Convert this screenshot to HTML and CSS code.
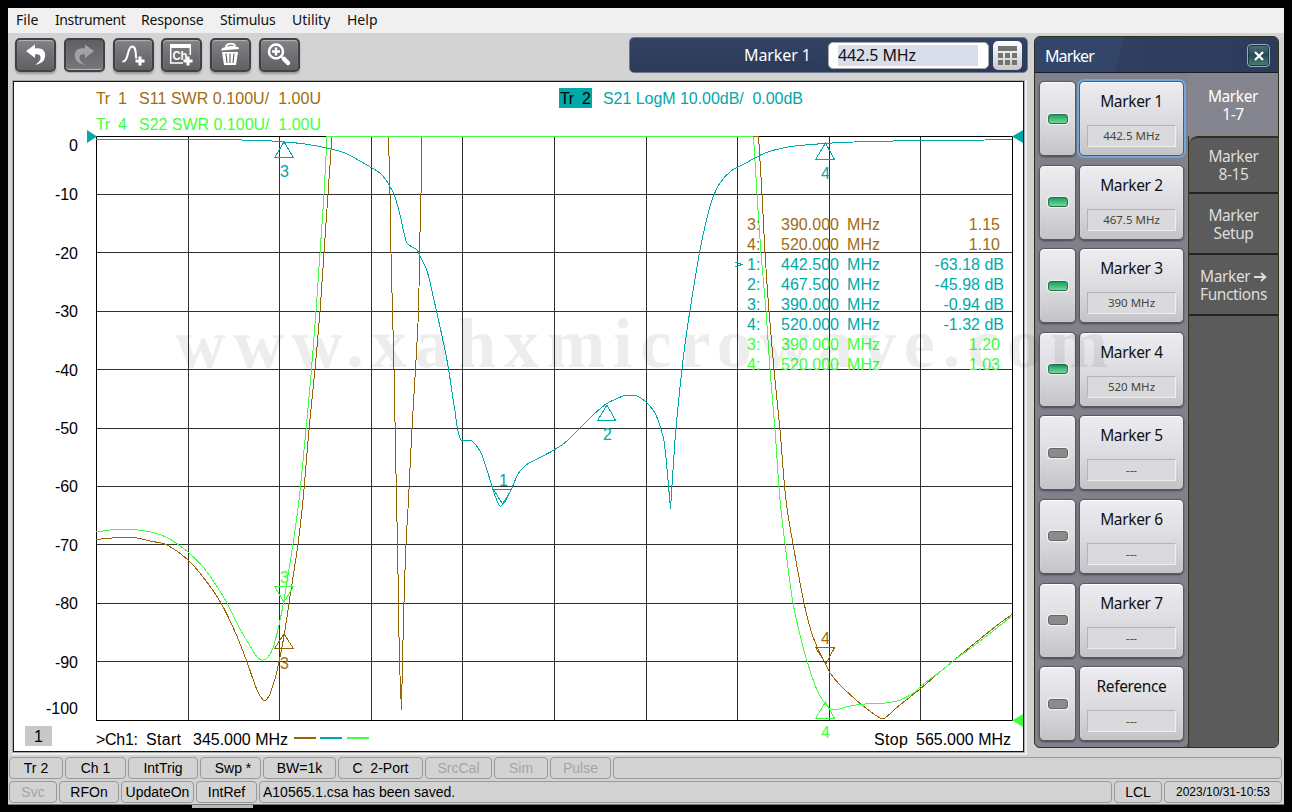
FILE: index.html
```html
<!DOCTYPE html>
<html lang="en">
  <head>
    <meta charset="UTF-8" />
    <title>Network Analyzer</title>
    <link rel="stylesheet" href="styles.css">
  </head>
  <body>
    <div class="window">
      <nav class="menu">
        <span class="m-file">File</span>
        <span class="m-inst">Instrument</span>
        <span class="m-resp">Response</span>
        <span class="m-stim">Stimulus</span>
        <span class="m-util">Utility</span>
        <span class="m-help">Help</span>
      </nav>

      <div class="main">
        <div class="left">
          <div class="toolbar">
            <div class="tools">
              <button class="tool">
                <svg viewBox="0 0 41 34"><path d="M11 13 L20 6.500 V10.500 C28 9 31 14 30 19 C29 24 25 26 20 27 C24 24 26 22 25.500 19 C25 16.500 23 16 20 16.500 V20 Z" fill="#fff" /></svg>
              </button>
              <button class="tool disabled">
                <svg viewBox="0 0 41 34"><path d="M30 13 L21 6.500 V10.500 C13 9 10 14 11 19 C12 24 16 26 21 27 C17 24 15 22 15.500 19 C16 16.500 18 16 21 16.500 V20 Z" fill="#a3a3a7" /></svg>
              </button>
              <button class="tool">
                <svg viewBox="0 0 41 34"><path d="M9.500 23.500 C16 24 14 8.500 19 8.500 C24 8.500 22 17 23.500 20.500" fill="none" stroke="#fff" stroke-width="2" /><path d="M27 18.500 V27.500 M22.500 23 H31.500" stroke="#fff" stroke-width="3" /></svg>
              </button>
              <button class="tool">
                <svg viewBox="0 0 41 34"><path d="M29.300 7 V17 M22 25 H9.700 V7" fill="none" stroke="#fff" stroke-width="1.500" /><path d="M9 6 H30 V10 H9 Z" fill="#fff" /><text x="11.500" y="21.500" textLength="15" lengthAdjust="spacingAndGlyphs" class="ch">Ch</text><path d="M27 18.500 V27.500 M22.500 23 H31.500" stroke="#fff" stroke-width="3" /></svg>
              </button>
              <button class="tool">
                <svg viewBox="0 0 41 34"><path d="M16 9 C16 5 24 5 25 8" fill="none" stroke="#fff" stroke-width="2" /><path d="M11 12.500 C11 8 29 6 29 11 Z M12 14 H28 L26 27 H14 Z" fill="#fff" /><path d="M16 15.500 L17 25 M20 15.500 V25 M24 15.500 L23 25" stroke="#666669" stroke-width="1.200" /></svg>
              </button>
              <button class="tool">
                <svg viewBox="0 0 41 34"><circle cx="17" cy="13.500" r="7" fill="none" stroke="#fff" stroke-width="2.500" /><path d="M17 9.500 V17.500 M13 13.500 H21" stroke="#fff" stroke-width="2.500" /><path d="M22 18.500 L24.500 20.500" stroke="#fff" stroke-width="2" /><path d="M25 21 L29 25" stroke="#fff" stroke-width="4.500" stroke-linecap="round" /></svg>
              </button>
            </div>
            <div class="entry">
              <label>Marker 1</label>
              <div class="field"><span>442.5 MHz</span></div>
              <button class="keypad">
                <svg viewBox="0 0 29 29"><path d="M5 5 H24 V10 H5 Z M5 12 h5 v5 h-5 Z M12 12 h5 v5 h-5 Z M19 12 h5 v5 h-5 Z M5 19 h5 v5 h-5 Z M12 19 h5 v5 h-5 Z M19 19 h5 v5 h-5 Z" fill="#737373" /></svg>
              </button>
            </div>
          </div>

          <div class="screen">
            <svg class="chart" viewBox="14 82 1009 669">
              <rect x="559" y="88" width="33" height="20" fill="#00a8a8" />
              <g class="brown">
                <text x="96" y="104" textLength="31">Tr&#160; 1</text>
                <text x="139" y="104" textLength="182">S11 SWR 0.100U/&#160; 1.00U</text>
              </g>
              <g class="green">
                <text x="96" y="130" textLength="31">Tr&#160; 4</text>
                <text x="139" y="130" textLength="182">S22 SWR 0.100U/&#160; 1.00U</text>
              </g>
              <text x="560" y="104" textLength="31">Tr&#160; 2</text>
              <text class="cyan" x="603" y="104" textLength="200">S21 LogM 10.00dB/&#160; 0.00dB</text>

              <g class="scale">
                <text x="78" y="151">0</text>
                <text x="78" y="200">-10</text>
                <text x="78" y="259">-20</text>
                <text x="78" y="317">-30</text>
                <text x="78" y="376">-40</text>
                <text x="78" y="434">-50</text>
                <text x="78" y="492">-60</text>
                <text x="78" y="551">-70</text>
                <text x="78" y="609">-80</text>
                <text x="78" y="668">-90</text>
                <text x="78" y="714">-100</text>
              </g>

              <path class="grid" d="M188.500 136V720M279.500 136V720M371.500 136V720M462.500 136V720M554.500 136V720M646.500 136V720M737.500 136V720M829.500 136V720M920.500 136V720M96 194.500H1012M96 252.500H1012M96 311.500H1012M96 369.500H1012M96 428.500H1012M96 486.500H1012M96 544.500H1012M96 603.500H1012M96 661.500H1012" />
              <path class="frame" d="M96.500 136.500H1012.500V720.500H96.500Z" />

              <g class="curves"></g>
              <path class="trace t1" d="M753 136.500H759" />
              <path class="trace t4" d="M327 136.500H753" />

              <g class="trace t2">
                <path d="M284 142L293.500 157.500H274.500Z" />
                <path d="M825.500 143L834.500 159.500H815.500Z" />
                <path d="M607 405L615.500 420.500H597.500Z" />
                <path d="M502.500 504L511.500 489.500H493.500Z" />
              </g>
              <g class="trace t4">
                <path d="M284 602L293.500 586.500H274.500Z" />
                <path d="M825.500 702L834.500 718.500H815.500Z" />
              </g>
              <g class="trace t1">
                <path d="M284 634L293.500 648.500H274.500Z" />
                <path d="M826 664L834.500 647.500H815.500Z" />
              </g>
              <g class="cyan">
                <text x="280" y="177">3</text>
                <text x="821" y="179">4</text>
                <text x="603" y="440">2</text>
                <text x="499" y="486">1</text>
              </g>
              <g class="green">
                <text x="280" y="583">3</text>
                <text x="821" y="738">4</text>
              </g>
              <g class="brown">
                <text x="280" y="669">3</text>
                <text x="821" y="644">4</text>
              </g>
              <path d="M87 130L97 136.500L87 143ZM1023 130L1012 136.500L1023 143Z" fill="#00a8a8" />
              <path d="M1023 714L1012 720.500L1023 727Z" fill="#40ff40" />

              <g class="readout"></g>

              <rect x="25" y="726" width="27" height="20" fill="#c8c8c8" />
              <text x="34" y="742">1</text>
              <text x="96" y="745" textLength="42">&gt;Ch1:</text>
              <text x="146" y="745" textLength="35">Start</text>
              <text x="193" y="745" textLength="95">345.000 MHz</text>
              <path class="trace t1 key" d="M294 738H316" />
              <path class="trace t2 key" d="M320 738H342" />
              <path class="trace t4 key" d="M347 738H369" />
              <text x="874" y="745" textLength="34">Stop</text>
              <text x="916" y="745" textLength="95">565.000 MHz</text>
            </svg>
          </div>
        </div>

        <aside class="panel">
          <header>Marker
            <button class="close"><svg viewBox="0 0 10 10"><path d="M1 1L9 9M9 1L1 9" /></svg></button>
          </header>
          <div class="panel-body">
            <div class="keys"></div>
            <div class="tabs">
              <div class="tab active">Marker<br />1-7</div>
              <div class="tab first">Marker<br />8-15</div>
              <div class="tab">Marker<br />Setup</div>
              <div class="tab"><span class="fn">Marker <svg viewBox="0 0 13 10"><path d="M0 5H11M7 1L11.500 5L7 9" /></svg></span>Functions</div>
            </div>
          </div>
        </aside>
      </div>

      <div class="status row1">
        <span>Tr 2</span><span>Ch 1</span><span>IntTrig</span><span class="swp">Swp *</span><span>BW=1k</span><span>C&#160; 2-Port</span><span class="off">SrcCal</span><span class="off">Sim</span><span class="off">Pulse</span><span></span>
      </div>
      <div class="status row2">
        <span class="off">Svc</span><span>RFOn</span><span>UpdateOn</span><span>IntRef</span><span class="message">A10565.1.csa has been saved.</span><span>LCL</span><span class="clock">2023/10/31-10:53</span>
      </div>

      <svg class="watermark" viewBox="0 0 950 90"><text x="4" y="64" textLength="933">www.xahxmicrowave.com</text></svg>
    </div>
    <div class="handle"></div>

    <script src="script.js"></script>
  </body>
</html>
```

FILE: script.js
```js
const traces = [
  ["t1", "96,539.5 112,538 137,538 150,541 167,545 188,560 203,577 221,603 236,634 247,662 257,690 263,700 266,700 270,694 276,675 281,652 285,630 289,603 298,544 303,500 309,430 315,369 320,311 324,253 328,194 332,136"],
  ["t1", "388.5,136 390,194 391,253 392.5,311 394,369 396.5,500 397.5,544 398.5,603 399.5,661 401.5,710"],
  ["t1", "401.5,710 402.5,661 404,603 406,544 408.5,500 412,428 415.5,369 418.5,311 419.5,253 421,194 422,136"],
  ["t1", "758.5,136 762,194 765,253 769,311 774,369 780,430 786,500 793,544 804,603 811,631 818,649 826,665 830,673 840,685 855,699 862,705 880,718 885,718 895,709 920,689 941,671 953,661 975,643 1000,623 1012,614.5"],
  ["t4", "96,532 110,530 125,529 138,530 155,533 170,539 180,546 188,552 203,567 214,582 227,603 240,629 252,649 258,658 263,660 268,657 273,648 279,625 284,600 288,575 293,544 299,500 305,440 311,375 316,311 320,253 324,194 327,136"],
  ["t4", "753.5,136 757,194 761,253 766,311 770,369 775,430 780,500 785,544 793,603 800,635 807,661 817,690 826,705 831,709 839,709 850,706 865,704 885,703 900,700 915,692 921,686 941,671 953,661 975,645 1012,616"],
  ["t2", "96,139.5 207,139.5 262,140.5 285,142 305,144 327,148 345,153 360,161 372,168 380,173 386,180 390,187 394,194 400,215 406,241 409,245 417,250 420,256 427,271 434,300 440,327 445,350 449,372 455,411 461,440 471,440.5 480,451 486,467 491,483 494,493 499,505 501,506 506,500 512,488 518,474 526,465 535,460 554,450 567,441 580,428 592,416 606,404 616,399 625,395.5 635,395.5 641,398 648,404 655,413 660,426 664,441 668,480 670.5,509"],
  ["t2", "670.5,509 673,470 676,428 681,378 684,352 688,323 694,285 700,250 706,222 712,200 720,183 731,171 746,163 755,158 765,153 785,147.5 805,145 825,143.5 840,142.5 872,141.5 920,140.5 985,140 1012,139.5"],
];

// smooth path through the points, tangent of each point taken from its neighbours
function smooth(str) {
  const p = str.split(" ").map((s) => s.split(",").map(Number));
  const tangent = (i) => {
    const a = p[Math.max(i - 1, 0)];
    const b = p[Math.min(i + 1, p.length - 1)];
    const len = Math.hypot(b[0] - a[0], b[1] - a[1]);
    return [(b[0] - a[0]) / len, (b[1] - a[1]) / len];
  };
  let d = `M${p[0]}`;
  for (let i = 1; i < p.length; i++) {
    const [a, b] = [p[i - 1], p[i]];
    const [ta, tb] = [tangent(i - 1), tangent(i)];
    const k = Math.hypot(b[0] - a[0], b[1] - a[1]) / 3;
    d += `C${a[0] + ta[0] * k} ${a[1] + ta[1] * k} ${b[0] - tb[0] * k} ${b[1] - tb[1] * k} ${b}`;
  }
  return d;
}

document.querySelector(".curves").innerHTML = traces
  .map(([name, points]) => `<path class="trace ${name}" d="${smooth(points)}" />`)
  .join("");

const rows = [
  ["brown", "3:", "390.000", "1.15"],
  ["brown", "4:", "520.000", "1.10"],
  ["cyan", "1:", "442.500", "-63.18 dB"],
  ["cyan", "2:", "467.500", "-45.98 dB"],
  ["cyan", "3:", "390.000", "-0.94 dB"],
  ["cyan", "4:", "520.000", "-1.32 dB"],
  ["green", "3:", "390.000", "1.20"],
  ["green", "4:", "520.000", "1.03"],
];

let readout = "";
rows.forEach(([color, n, freq, value], i) => {
  const y = 230 + i * 20;
  const right = value.includes("dB") ? 1004 : 1000;
  readout += `<g class="${color}">
    <text x="747" y="${y}">${n}</text>
    <text x="781" y="${y}" textLength="58">${freq}</text>
    <text x="847" y="${y}" textLength="33">MHz</text>
    <text x="${right}" y="${y}" text-anchor="end">${value}</text>
  </g>`;
});
readout += `<path class="trace t2" d="M735 262L742 264.5L735 267" />`;
document.querySelector(".readout").innerHTML = readout;

const markers = [
  ["Marker 1", "442.5 MHz"],
  ["Marker 2", "467.5 MHz"],
  ["Marker 3", "390 MHz"],
  ["Marker 4", "520 MHz"],
  ["Marker 5", "---"],
  ["Marker 6", "---"],
  ["Marker 7", "---"],
  ["Reference", "---"],
];

document.querySelector(".keys").innerHTML = markers
  .map(
    ([name, value], i) => `<div class="key-row">
      <button class="led-key"><i class="led ${i < 4 ? "on" : ""}"></i></button>
      <button class="marker-key ${i === 0 ? "selected" : ""}">
        <b>${name}</b>
        <span>${value}</span>
      </button>
    </div>`
  )
  .join("");
```

FILE: styles.css
```css
* {
  margin: 0;
  padding: 0;
  box-sizing: border-box;
}

body {
  background: #000;
  padding: 8px;
  height: 812px;
  overflow: hidden;
  font-family: "Noto Sans", sans-serif;
}

button {
  border: none;
  font-family: inherit;
}

.window {
  position: relative;
  width: 1276px;
  height: 797px;
  background: #d3d3d3;
  border-bottom: 1px solid #777;
}

.menu {
  display: flex;
  height: 25px;
  padding-left: 8px;
  background: #f0f0f0;
  font-size: 14px;
  line-height: 24px;
  color: #111;
  white-space: nowrap;
}

.m-file { width: 39px; }
.m-inst { width: 86px; letter-spacing: -0.4px; }
.m-resp { width: 79px; letter-spacing: -0.15px; }
.m-stim { width: 72px; letter-spacing: -0.2px; }
.m-util { width: 55px; }

.main {
  display: flex;
  justify-content: space-between;
  height: 723px;
  padding: 3px 5px 0 5px;
}

.left {
  width: 1015px;
}

.toolbar {
  display: flex;
  justify-content: space-between;
  height: 45px;
  padding: 1px 0 0 2px;
}

.tools {
  display: flex;
  gap: 7.8px;
  padding-top: 1px;
}

.tool {
  width: 41px;
  height: 34px;
  border: 2px solid #414145;
  border-radius: 5px;
  background: linear-gradient(#828287, #6f6f74 50%, #616165);
  box-shadow: inset 0 1px 1px #b5b5ba, 0 2px 2px #999;
}

.tool svg {
  display: block;
  width: 41px;
  height: 34px;
  margin: -2px;
}

.tool.disabled {
  background: linear-gradient(#5f5f65, #77777b);
  box-shadow: inset 0 -1px 1px #bbb, 0 1px 1px #aaa;
}

.ch {
  font: bold 13px "Liberation Sans", sans-serif;
  fill: #fff;
}

.entry {
  display: flex;
  align-items: center;
  width: 399px;
  height: 36px;
  padding: 0 5px 0 114px;
  border: 1px solid #6f7890;
  border-radius: 5px;
  background: linear-gradient(#324363, #2c3a59);
  color: #fff;
  font-size: 16px;
}

.entry label {
  width: 84px;
  letter-spacing: -0.1px;
  white-space: nowrap;
}

.field {
  width: 161px;
  height: 27px;
  padding: 2px 10px 3px 9px;
  border: 1px solid #aaa;
  border-radius: 5px;
  background: #fff;
  color: #111;
}

.field span {
  display: block;
  height: 21px;
  line-height: 20px;
  letter-spacing: -0.1px;
  background: #d8deea;
}

.keypad {
  width: 29px;
  height: 29px;
  margin-left: 4px;
  border-radius: 5px;
  background: linear-gradient(#fff, #c8c8c8);
}

.keypad svg {
  display: block;
}

.screen {
  width: 1011px;
  height: 671px;
  background: #fff;
  border: 1px solid #151515;
  box-shadow: 0 0 0 1px #aaa, 1px 1px 0 2px #eee;
}

.chart {
  display: block;
  width: 1009px;
  height: 669px;
}

.chart text {
  font: 16px "Liberation Sans", Arial, sans-serif;
}

.grid,
.frame {
  fill: none;
  stroke: #303030;
  shape-rendering: crispEdges;
}

.frame {
  stroke: #000;
}

.scale {
  text-anchor: end;
}

.brown { fill: #a06c10; }
.cyan { fill: #00a8a8; }
.green { fill: #40ff40; }

.trace {
  fill: none;
  stroke-width: 1;
  shape-rendering: crispEdges;
}

.t1 { stroke: #966400; }
.t2 { stroke: #00a8a8; }
.t4 { stroke: #40ff40; }

.key {
  stroke-width: 2;
}

.panel {
  width: 245px;
  height: 712px;
  border: 1px solid #30311d;
  border-radius: 6px;
  background: #5b5b5b;
  overflow: hidden;
}

.panel header {
  display: flex;
  justify-content: space-between;
  align-items: center;
  height: 36px;
  padding: 2px 8px 0 10px;
  border-bottom: 1px solid #151d2d;
  background: linear-gradient(105deg, #34456a 35%, #2f3f60 35.5%, #2d3b5b);
  color: #fff;
  font-size: 16px;
  letter-spacing: -0.9px;
}

.close {
  display: flex;
  align-items: center;
  justify-content: center;
  width: 23px;
  height: 23px;
  border: 1px solid #9aabb8;
  border-radius: 4px;
  background: linear-gradient(#506f7d, #244a54 50%, #448579);
  box-shadow: inset 0 0 0 1px #20364a;
}

.close svg {
  width: 10px;
  height: 10px;
  fill: none;
  stroke: #fff;
  stroke-width: 2.2;
}

.panel-body {
  display: flex;
  height: 674px;
}

.keys {
  width: 153px;
  padding: 8px 0 0 4px;
  background: #81818c;
  border-radius: 0 0 5px 5px;
}

.key-row {
  display: flex;
  gap: 3px;
  height: 83.6px;
}

.led-key,
.marker-key {
  height: 75px;
  border: 1px solid #59595f;
  border-radius: 5px;
  background: linear-gradient(#ececf1, #dcdce1 50%, #c3c3c8);
  box-shadow: inset 0 1px 1px #fff, 0 1px 2px #44444c;
}

.led-key {
  display: flex;
  align-items: center;
  justify-content: center;
  width: 37px;
}

.led {
  width: 20px;
  height: 10px;
  border: 1px solid #666;
  border-radius: 3px;
  background: #8b8b8b;
  box-shadow: 0 0 1px 1px #f4f4f4;
}

.led.on {
  border-color: #267050;
  background: linear-gradient(#17a160, #76d69b);
}

.marker-key {
  display: flex;
  flex-direction: column;
  width: 105px;
  padding: 8px 7px 0;
  color: #111;
}

.marker-key.selected {
  box-shadow: inset 0 1px 1px #fff, 0 0 0 2px #70a5dd;
}

.marker-key b {
  width: 100%;
  height: 22px;
  line-height: 22px;
  font-weight: normal;
  font-size: 15.5px;
  letter-spacing: -0.35px;
}

.marker-key span {
  width: 100%;
  height: 22px;
  margin-top: 13px;
  border: 1px solid #b3b3b9;
  border-right-color: #eee;
  border-bottom-color: #eee;
  background: #dadadd;
  color: #454538;
  font-size: 11.5px;
  line-height: 20px;
}

.tabs {
  width: 90px;
  color: #ddd;
  border-left: 1px solid #30311d;
  background: linear-gradient(#81818c 80px, #5b5b5b 80px);
}

.tab {
  display: flex;
  flex-direction: column;
  justify-content: center;
  height: 61px;
  border-bottom: 2px solid #232323;
  background: #5b5b5b;
  text-align: center;
  font-size: 15.5px;
  line-height: 18px;
  letter-spacing: -0.4px;
}

.tab.active {
  height: 63px;
  margin-left: -1px;
  background: #85858f;
  border-bottom: none;
  color: #fff;
}

.tab.first {
  height: 58px;
  border-top: 2px solid #30311d;
  border-radius: 9px 0 0 0;
}

.fn svg {
  width: 13px;
  height: 10px;
  fill: none;
  stroke: #ddd;
  stroke-width: 1.8;
}

.status {
  display: grid;
  gap: 2px;
  height: 22px;
  margin: 1px 2px 0 1px;
  font: 14px/20px "Liberation Sans", Arial, sans-serif;
  text-align: center;
  white-space: nowrap;
}

.row1 {
  grid-template-columns: 54px 61px 70px 61px 73px 85px 67px 54px 61px 1fr;
}

.row2 {
  grid-template-columns: 48px 60px 73px 61px 1fr 48px 118px;
  margin-top: 2px;
}

.status span {
  height: 22px;
  border: 1px solid #999;
  border-radius: 4px;
}

.status .off {
  color: #a5a5a5;
}

.status .swp {
  padding-left: 5px;
}

.status .message {
  text-align: left;
  padding-left: 3px;
}

.status .clock {
  font-size: 12px;
}

/* semi-transparent site mark across the plot and the side panel */
.watermark {
  position: absolute;
  left: 163px;
  top: 295px;
  width: 950px;
  height: 90px;
  pointer-events: none;
}

.watermark text {
  font: bold 70px "Liberation Serif", serif;
  fill: #000;
  opacity: 0.065;
}

.handle {
  width: 61px;
  height: 3px;
  margin-left: 184px;
  background: #b8b8b8;
}
```
